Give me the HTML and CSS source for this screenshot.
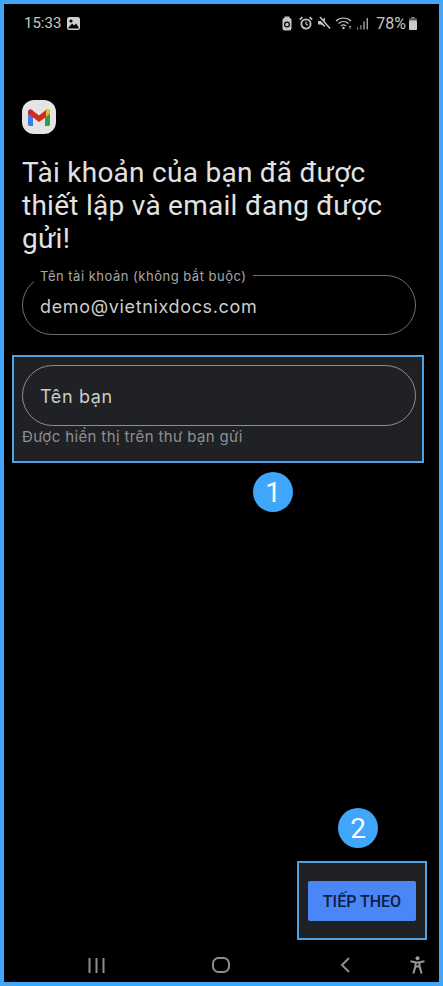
FILE: index.html
```html
<!doctype html>
<html lang="vi">

<head>
  <meta charset="UTF-8" />
  <title>Gmail</title>
  <link rel="stylesheet" href="styles.css">
</head>

<body>
  <div class="screen">
    <div class="status-bar">
      <div class="status-left">
        <span>15:33</span>
        <svg class="status-icon" width="13" height="13" viewBox="0 0 13 13">
          <rect x="0" y="0" width="13" height="13" rx="2.5" fill="#cfcfcf" />
          <path d="M1.5 10.5 L5 6.5 L7 8.5 L9 6.5 L11.5 10 L11.5 11.5 L1.5 11.5 Z" fill="#000" />
          <circle cx="4" cy="4" r="1.6" fill="#000" />
        </svg>
      </div>
      <div class="status-right">
        <svg class="lock" width="10" height="15" viewBox="0 0 10 15">
          <rect x="0.5" y="2" width="9" height="12.5" rx="2" fill="#c4c4c4" />
          <rect x="2.5" y="0.5" width="5" height="2" fill="#c4c4c4" />
          <circle cx="5" cy="8.5" r="2.4" fill="none" stroke="#000" stroke-width="1.2" />
        </svg>
        <svg width="14" height="14" viewBox="0 0 14 14">
          <circle cx="7" cy="8" r="4.6" fill="none" stroke="#c4c4c4" stroke-width="1.8" />
          <path d="M7 5.5 V8 L8.8 9.2" fill="none" stroke="#c4c4c4" stroke-width="1.2" />
          <path d="M0.8 3.6 L3.4 1.2 M13.2 3.6 L10.6 1.2" stroke="#c4c4c4" stroke-width="1.8" />
        </svg>
        <svg width="14" height="14" viewBox="0 0 14 14">
          <path d="M1 5 H4 L8 1.5 V11 L4 8.5 H1 Z" fill="#c4c4c4" />
          <path d="M2 1 L13 13" stroke="#000" stroke-width="2.6" />
          <path d="M3 1 L13 12.5" stroke="#c4c4c4" stroke-width="1.5" />
        </svg>
        <svg width="18" height="14" viewBox="0 0 18 14">
          <path d="M1 5 C5 1 12 1 16 5 M3.5 7.5 C6.5 4.8 10.5 4.8 13.5 7.5 M6 10 C7.5 8.7 9.5 8.7 11 10" fill="none" stroke="#c4c4c4" stroke-width="1.2" />
          <circle cx="8.5" cy="12" r="1.2" fill="#c4c4c4" />
          <path d="M15 10 V13 M14 11 L15 10 L16 11" fill="none" stroke="#c4c4c4" stroke-width="0.8" />
        </svg>
        <svg width="12" height="13" viewBox="0 0 12 13">
          <rect x="0" y="10.5" width="1.3" height="2" fill="#8a8a8a" />
          <rect x="3.2" y="8" width="1.3" height="4.5" fill="#8a8a8a" />
          <rect x="6.4" y="4.5" width="1.3" height="8" fill="#b4b4b4" />
          <rect x="9.6" y="1" width="1.3" height="11.5" fill="#b4b4b4" />
        </svg>
        <span class="battery-text">78%</span>
        <svg width="8" height="13" viewBox="0 0 8 13">
          <rect x="2.2" y="0" width="3.6" height="1.5" fill="#8f8f8f" />
          <rect x="0" y="1.2" width="8" height="11.8" rx="1" fill="#5e5e5e" />
          <rect x="0" y="3.6" width="8" height="9.4" rx="1" fill="#c9c9c9" />
        </svg>
      </div>
    </div>

    <div class="content">
      <div class="app-logo">
        <svg width="22" height="17" viewBox="0 0 22 17">
          <path d="M0 3 C0 0.5 2.5 -0.5 4 1 L5 2 V17 H1.8 C0.8 17 0 16.2 0 15.2 Z" fill="#3f7ee8" />
          <path d="M22 3 C22 0.5 19.5 -0.5 18 1 L17 2 V17 H20.2 C21.2 17 22 16.2 22 15.2 Z" fill="#2f9e50" />
          <path d="M17 2 L18 1 C19.5 -0.5 22 0.5 22 3 L22 4.6 L17 8.4 Z" fill="#f2bb1d" />
          <path d="M0 3 C0 1 2.5 -0.5 4 1 L11 6.4 L18 1 V8 L11 13 L0 4.6 Z" fill="#d5281f" />
        </svg>
      </div>

      <h1 class="title">Tài khoản của bạn đã được thiết lập và email đang được gửi!</h1>

      <div class="field account-field">
        <span class="field-label">Tên tài khoản (không bắt buộc)</span>
        <span class="field-value">demo@vietnixdocs.com</span>
      </div>

      <div class="highlight name-box">
        <div class="field">
          <span class="field-value">Tên bạn</span>
        </div>
        <div class="helper">Được hiển thị trên thư bạn gửi</div>
      </div>

      <div class="badge badge-one">1</div>

      <div class="footer">
        <div class="badge badge-two">2</div>
        <div class="highlight next-box">
          <button class="next-btn">TIẾP THEO</button>
        </div>
      </div>
    </div>

    <div class="nav-bar">
      <svg width="17" height="15" viewBox="0 0 17 15">
        <path d="M1.5 0 V15 M8.5 0 V15 M15.5 0 V15" stroke="#8d8d8d" stroke-width="2" />
      </svg>
      <svg class="nav-home" width="18" height="16" viewBox="0 0 18 16">
        <rect x="1" y="1" width="16" height="14" rx="5.5" fill="none" stroke="#8d8d8d" stroke-width="2" />
      </svg>
      <svg class="nav-back" width="10" height="16" viewBox="0 0 10 16">
        <path d="M9 1 L2 8 L9 15" fill="none" stroke="#8d8d8d" stroke-width="2" />
      </svg>
      <svg class="nav-access" width="15" height="18" viewBox="0 0 15 18">
        <circle cx="7.5" cy="2.2" r="2" fill="#9a9a9a" />
        <path d="M0.5 5.2 L5.5 6.4 V10 L3.4 17.4 M14.5 5.2 L9.5 6.4 V10 L11.6 17.4 M5.5 6.4 H9.5 M5.5 10.5 H9.5" fill="none" stroke="#9a9a9a" stroke-width="2" />
      </svg>
    </div>
  </div>
</body>

</html>
```

FILE: styles.css
```css
* {
  margin: 0;
  padding: 0;
  box-sizing: border-box;
  font-family: Roboto, 'Noto Sans', sans-serif;
}

body {
  background: #000;
}

.screen {
  width: 443px;
  height: 986px;
  border: 4px solid #3fa6fb;
  background: #000;
  display: flex;
  flex-direction: column;
  overflow: hidden;
}

.status-bar {
  height: 38px;
  flex: none;
  padding: 0 22px 0 20px;
  display: flex;
  justify-content: space-between;
  align-items: center;
  color: #c8c8c8;
  font-size: 15px;
}

.status-left,
.status-right {
  display: flex;
  align-items: center;
}

.status-left {
  gap: 6px;
}

.status-right {
  gap: 4px;
}

.lock {
  margin-right: 3px;
}

.battery-text {
  font-size: 16px;
  margin-left: 3px;
  margin-right: -1px;
}

.content {
  flex: 1;
  min-height: 0;
  display: flex;
  flex-direction: column;
  padding: 58px 0 0 8px;
}

.app-logo {
  width: 34px;
  height: 34px;
  margin-left: 10px;
  border-radius: 12px;
  background: #e4e4e2;
  display: flex;
  align-items: center;
  justify-content: center;
}

.title {
  margin: 22px 20px 0 10px;
  color: #e2e2e2;
  font-size: 28px;
  font-weight: 400;
  line-height: 33px;
  letter-spacing: 0.27px;
}

.field {
  position: relative;
  width: 394px;
  height: 61px;
  border: 1px solid #8e8e8e;
  border-radius: 31px;
  padding: 2px 17px 0;
  display: flex;
  align-items: center;
}

.account-field {
  margin: 20px 0 0 10px;
  height: 60px;
  border-color: #6f6f6f;
}

.field-label {
  position: absolute;
  left: 11px;
  top: -8px;
  padding: 0 6px;
  background: #000;
  color: #a8a8a8;
  font-family: Inter, Roboto, sans-serif;
  font-size: 13px;
  line-height: 16px;
  letter-spacing: 0.5px;
}

.field-value {
  color: #cccccc;
  font-family: Inter, Roboto, sans-serif;
  font-size: 18px;
  letter-spacing: 0.65px;
}

.highlight {
  border: 2px solid #4ba3e8;
  background: #1f2124;
}

.name-box {
  width: 412px;
  height: 108px;
  margin-top: 20px;
  padding: 8px;
}

.helper {
  margin-top: 1px;
  color: #8f9092;
  font-family: Inter, Roboto, sans-serif;
  font-size: 15px;
  line-height: 20px;
  letter-spacing: 0.37px;
}

.badge {
  width: 40px;
  height: 40px;
  border-radius: 50%;
  background: #3fa6fb;
  color: #fff;
  font-size: 28px;
  display: flex;
  align-items: center;
  justify-content: center;
}

.badge-one {
  margin: 9px 0 0 241px;
}

.footer {
  margin-top: auto;
  align-self: flex-end;
  margin-right: 12px;
  display: flex;
  flex-direction: column;
}

.badge-two {
  margin: 0 0 13px 41px;
}

.next-box {
  width: 130px;
  height: 79px;
  padding: 18px 9px 0 9px;
}

.next-btn {
  width: 108px;
  height: 40px;
  border: none;
  border-radius: 2px;
  background: #4a86f5;
  color: #0b1d4a;
  font-size: 16px;
  font-weight: 500;
}

.nav-bar {
  height: 42px;
  flex: none;
  display: flex;
  align-items: center;
  padding: 8px 0 0 84px;
}

.nav-home {
  margin-left: 107px;
}

.nav-back {
  margin-left: 110px;
}

.nav-access {
  margin-left: 60px;
}
```
